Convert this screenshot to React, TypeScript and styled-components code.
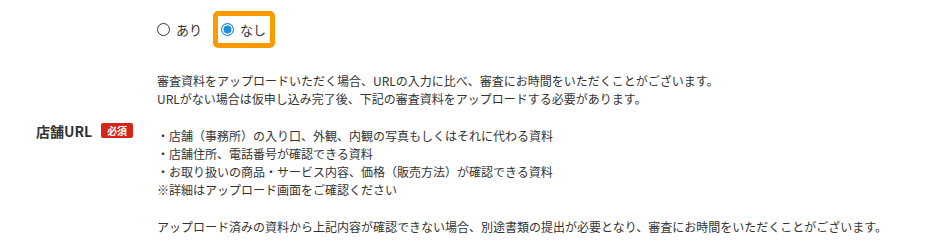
import styled, { createGlobalStyle } from 'styled-components'

const GlobalStyle = createGlobalStyle`
    body {
        margin: 0;
        background: #fff;
        font-family: "Noto Sans CJK JP", "Noto Sans", sans-serif;
        color: #333;
    }
`

const FormRow = styled.div`
    display: flex;
    padding: 11px 0 0 36px;
`

const LabelCell = styled.div`
    width: 121px;
    flex-shrink: 0;
    display: flex;
    align-items: center;
    gap: 9px;
    padding-top: 14px;
`

const LabelText = styled.span`
    font-size: 14px;
    font-weight: 700;
    line-height: 20px;
    color: #333;
`

const RequiredBadge = styled.span`
    display: inline-flex;
    align-items: center;
    justify-content: center;
    width: 32px;
    height: 15px;
    border-radius: 2px;
    background: #d4251b;
    color: #fff;
    font-size: 10px;
    font-weight: 700;
    line-height: 1;
`

const ContentCell = styled.div`
    display: flex;
    flex-direction: column;
`

const RadioGroup = styled.div`
    display: flex;
    align-items: center;
    gap: 11px;
    height: 37px;
`

const RadioOption = styled.label<{ $focused?: boolean }>`
    display: flex;
    align-items: center;
    gap: 6px;
    height: 27px;
    font-size: 13px;
    color: #333;
    border: ${p => (p.$focused ? '5px solid #ff9900' : 'none')};
    border-radius: 5px;
    padding: ${p => (p.$focused ? '0 4px 0 3px' : '0')};
`

const RadioDot = styled.span<{ $checked?: boolean }>`
    box-sizing: border-box;
    width: 13px;
    height: 13px;
    border-radius: 50%;
    border: 1px solid ${p => (p.$checked ? '#1c86d1' : '#333')};
    background: ${p => (p.$checked ? '#1c8fdb' : '#fff')};
    box-shadow: ${p => (p.$checked ? 'inset 0 0 0 1.5px #fff' : 'none')};
`

const Notes = styled.div`
    margin-top: 24px;
    font-size: 12px;
    line-height: 18px;
    color: #333;
`

const NoteLine = styled.p<{ $gapBefore?: boolean }>`
    margin: 0;
    margin-top: ${p => (p.$gapBefore ? '19px' : '0')};
    white-space: nowrap;
`

const lines = [
    { text: '審査資料をアップロードいただく場合、URLの入力に比べ、審査にお時間をいただくことがございます。' },
    { text: 'URLがない場合は仮申し込み完了後、下記の審査資料をアップロードする必要があります。' },
    { text: '・店舗（事務所）の入り口、外観、内観の写真もしくはそれに代わる資料', gap: true },
    { text: '・店舗住所、電話番号が確認できる資料' },
    { text: '・お取り扱いの商品・サービス内容、価格（販売方法）が確認できる資料' },
    { text: '※詳細はアップロード画面をご確認ください' },
    { text: 'アップロード済みの資料から上記内容が確認できない場合、別途書類の提出が必要となり、審査にお時間をいただくことがございます。', gap: true },
]

export default function App() {
    return (
        <>
            <GlobalStyle />
            <FormRow>
                <LabelCell>
                    <LabelText>店舗URL</LabelText>
                    <RequiredBadge>必須</RequiredBadge>
                </LabelCell>
                <ContentCell>
                    <RadioGroup>
                        <RadioOption>
                            <RadioDot />
                            あり
                        </RadioOption>
                        <RadioOption $focused>
                            <RadioDot $checked />
                            なし
                        </RadioOption>
                    </RadioGroup>
                    <Notes>
                        {lines.map((l, i) => (
                            <NoteLine key={i} $gapBefore={l.gap}>{l.text}</NoteLine>
                        ))}
                    </Notes>
                </ContentCell>
            </FormRow>
        </>
    )
}
